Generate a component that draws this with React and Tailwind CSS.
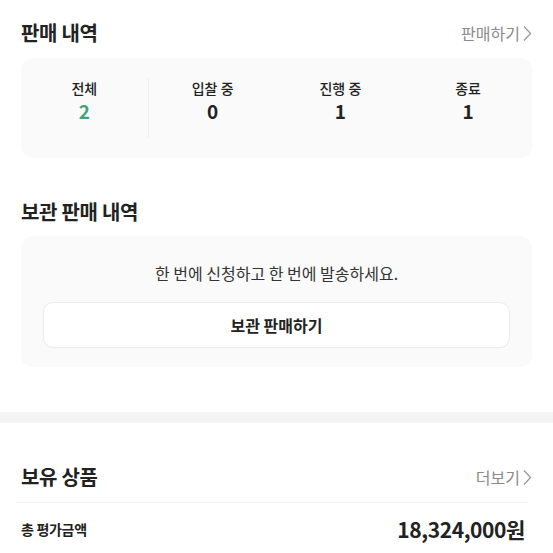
const stats = [
  { label: '전체', value: 2, active: true },
  { label: '입찰 중', value: 0 },
  { label: '진행 중', value: 1 },
  { label: '종료', value: 1 },
]

function SectionHeader({ title, link }) {
  return (
    <div className="flex items-center justify-between">
      <h2 className="text-[20px] font-bold text-[#222] tracking-[-0.3px]">{title}</h2>
      {link && (
        <span className="flex items-center gap-[3px] text-[16px] text-[#8a8a8a]">
          {link}
          <svg width="9" height="17" viewBox="0 0 9 17" fill="none">
            <path d="M1 1.5L7.5 8.5L1 15.5" stroke="#9a9a9a" strokeWidth="1.3" />
          </svg>
        </span>
      )}
    </div>
  )
}

export default function App() {
  return (
    <div className="w-[553px] h-[553px] overflow-hidden bg-white font-['Noto_Sans_CJK_KR','Noto_Sans',sans-serif]">
      <div className="px-[21px] pt-[18px]">
        <SectionHeader title="판매 내역" link="판매하기" />
        <div className="mt-[10px] grid grid-cols-4 rounded-xl bg-[#fafafa] py-[20px]">
          {stats.map((s, i) => (
            <div key={s.label} className={`flex flex-col items-center ${i === 0 ? 'border-r border-[#efefef]' : ''}`}>
              <span className="text-[14px] font-medium leading-[20px] text-[#222]">{s.label}</span>
              <span className={`text-[19px] font-bold leading-[26px] ${s.active ? 'text-[#41a37a]' : 'text-[#222]'}`}>{s.value}</span>
              <span className="h-[14px]" />
            </div>
          ))}
        </div>

        <div className="mt-[39px]">
          <SectionHeader title="보관 판매 내역" />
        </div>
        <div className="mt-[9px] rounded-xl bg-[#fafafa] px-[22px] pt-[26px] pb-[19px]">
          <p className="text-center text-[16px] text-[#333] leading-[22px]">한 번에 신청하고 한 번에 발송하세요.</p>
          <button className="mt-[18px] h-[46px] w-full rounded-[10px] border border-[#ebebeb] bg-white text-[16px] font-bold text-[#222]">
            보관 판매하기
          </button>
        </div>
      </div>

      <div className="mt-[45px] h-[11px] bg-[#f4f4f4]" />

      <div className="px-[21px] pt-[39px]">
        <SectionHeader title="보유 상품" link="더보기" />
        <div className="mt-[10px] -ml-[5px] mr-[4px] border-t border-[#f0f0f0]" />
        <div className="flex items-center justify-between pt-[11px] pr-[7px]">
          <span className="text-[14px] font-bold text-[#222] tracking-[-0.3px]">총 평가금액</span>
          <span className="text-[21px] font-bold text-[#222] tracking-[-0.4px]">18,324,000원</span>
        </div>
      </div>
    </div>
  )
}
